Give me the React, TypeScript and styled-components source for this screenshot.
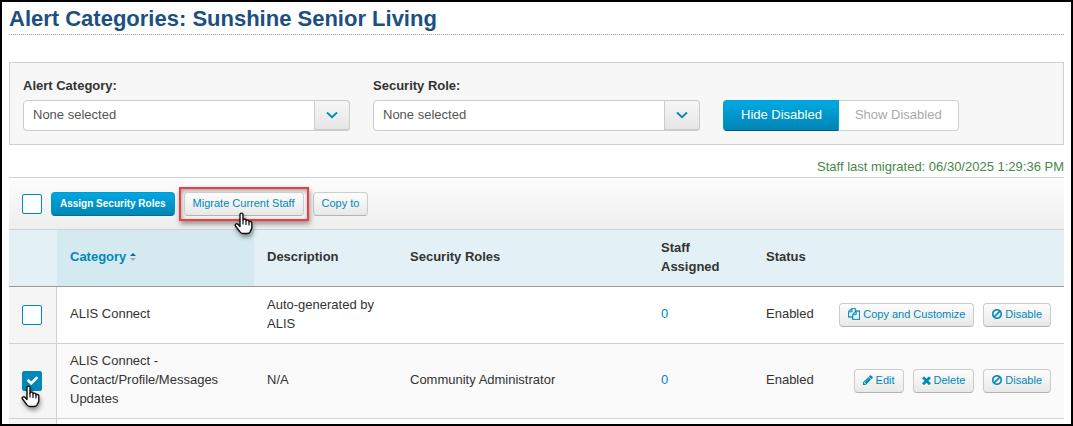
import React from "react";
import styled, { createGlobalStyle, css } from "styled-components";

const colors = {
  link: "#0088b9",
  text: "#333",
  line: "#d1d1d1",
  title: "#1b5080",
};

const GlobalStyle = createGlobalStyle`
  *, *::before, *::after { box-sizing: border-box; }
  body {
    margin: 0;
    background: #fff;
    color: ${colors.text};
    font: 13px/18px "Liberation Sans", Arial, sans-serif;
  }
  button, select, input { font-family: inherit; }
`;

const Frame = styled.main`
  height: 100vh;
  overflow: hidden;
  padding: 0 7px;
  border: 2px solid #000;
`;

const Title = styled.h1`
  margin: 0 0 27px;
  padding: 5px 0 3px;
  border-bottom: 1px dotted #999;
  color: ${colors.title};
  font-size: 22px;
  line-height: 24px;
`;

const FilterPanel = styled.section`
  display: flex;
  align-items: flex-end;
  gap: 23px;
  padding: 14px 13px 13px;
  border: 1px solid ${colors.line};
  background: #f7f7f7;
`;

const Field = styled.div`
  display: flex;
  flex-direction: column;
  flex: 0 1 327px;
  gap: 5px;
`;

const Label = styled.label`
  font-weight: bold;
`;

const SelectBox = styled.div`
  display: flex;
  position: relative;
  height: 31px;
`;

const Select = styled.select`
  appearance: none;
  width: 100%;
  padding: 0 44px 2px 9px;
  border: 1px solid #ccc;
  border-radius: 4px;
  background: #fff;
  color: #555;
  font-size: 13px;
`;

const SelectArrow = styled.span`
  position: absolute;
  top: 0;
  right: 0;
  bottom: 0;
  display: grid;
  place-items: center;
  width: 36px;
  border: 1px solid #ccc;
  border-bottom-width: 2px;
  border-radius: 0 4px 4px 0;
  background: linear-gradient(#f6f6f6, #e6e6e6);
  color: ${colors.link};
  pointer-events: none;
`;

const Segmented = styled.div`
  display: flex;
`;

const Segment = styled.button<{ $active?: boolean }>`
  height: 31px;
  padding: 0 16px 2px;
  font-size: 13px;
  white-space: nowrap;
  ${(p) =>
    p.$active
      ? css`
          padding-left: 17px;
          border: 1px solid #00a1da;
          border-bottom-color: #00587a;
          border-radius: 4px 0 0 4px;
          background: linear-gradient(#00a9e3, #0084b4);
          color: #fff;
        `
      : css`
          border: 1px solid ${colors.line};
          border-left: 0;
          border-radius: 0 4px 4px 0;
          background: #fff;
          color: #aaa;
        `}
`;

const Migrated = styled.p`
  margin: 0;
  padding: 13px 0 1px;
  color: #468847;
  text-align: right;
`;

const Toolbar = styled.div`
  display: flex;
  align-items: center;
  gap: 9px;
  height: 53px;
  padding: 0 13px;
  border-top: 1px solid ${colors.line};
  border-bottom: 1px solid ${colors.line};
  background: linear-gradient(#fdfdfd, #eee);
`;

const CheckWrap = styled.span`
  display: flex;
  position: relative;
  width: 20px;
  height: 20px;
`;

const Check = styled.input`
  appearance: none;
  width: 20px;
  height: 20px;
  margin: 0;
  border: 1px solid ${colors.link};
  border-radius: 2px;
  background: #fff;
  &:checked { background: ${colors.link}; }
`;

const Tick = styled.svg`
  position: absolute;
  top: 3px;
  left: 4px;
  pointer-events: none;
`;

const Button = styled.button<{ $primary?: boolean }>`
  display: inline-flex;
  align-items: center;
  gap: 3px;
  height: 24px;
  padding: 0 8px 1px;
  border: 1px solid #ccc;
  border-bottom-color: #b3b3b3;
  border-radius: 4px;
  background: linear-gradient(#fdfdfd, #e8e8e8);
  color: ${colors.link};
  font-size: 11px;
  white-space: nowrap;
  ${(p) =>
    p.$primary &&
    css`
      border-color: #009bd2 #009bd2 #006d95;
      background: linear-gradient(#00a7e1, #0084b4);
      color: #fff;
      font-size: 10px;
      font-weight: bold;
    `}
`;

const Highlight = styled.div`
  display: flex;
  position: relative;
  margin: 0 -5px;
  padding: 3px;
  border: 2px solid #f03e3e;
  box-shadow: 1px 3px 5px rgba(0, 0, 0, 0.4), inset 1px 2px 4px rgba(0, 0, 0, 0.35);
`;

const Pointer = styled.svg<{ $left: number; $top: number }>`
  position: absolute;
  z-index: 1;
  left: ${(p) => p.$left}px;
  top: ${(p) => p.$top}px;
  filter: drop-shadow(1px 3px 2px rgba(0, 0, 0, 0.4));
  pointer-events: none;
`;

const Table = styled.table`
  width: 100%;
  table-layout: fixed;
  border-collapse: separate;
  border-spacing: 0;
  line-height: 19px;
`;

const Col = styled.col<{ $w?: number }>`
  width: ${(p) => (p.$w ? `${p.$w}px` : "auto")};
`;

const HeadCell = styled.th<{ $sorted?: boolean }>`
  height: 57px;
  padding: 7px 13px 10px;
  border-bottom: 1px solid #999;
  background: ${(p) => (p.$sorted ? "#d4e9f0" : "#e3f1f6")};
  text-align: left;
`;

const SortLink = styled.a`
  display: inline-flex;
  align-items: center;
  gap: 4px;
  color: ${colors.link};
  text-decoration: none;
`;

const Row = styled.tr<{ $alt?: boolean }>`
  background: ${(p) => (p.$alt ? "#fafafa" : "#fff")};
`;

const Cell = styled.td`
  height: 57px;
  padding: 7px 13px 10px;
  border-bottom: 1px solid ${colors.line};
  vertical-align: middle;
`;

const CheckCell = styled(Cell)`
  padding: 10px 13px;
  border-right: 1px solid ${colors.line};
  background: #f5f5f5;
`;

const ActionCell = styled(Cell)`
  padding: 9px 13px 10px;
`;

const NextRowCell = styled.td`
  height: 20px;
  &:first-child {
    border-right: 1px solid ${colors.line};
    background: #f5f5f5;
  }
`;

const CountLink = styled.a`
  color: ${colors.link};
  text-decoration: none;
`;

const Actions = styled.div`
  display: flex;
  justify-content: flex-end;
  gap: 9px;
`;

const iconPaths = {
  copy: "M1696 384q40 0 68 28t28 68v1216q0 40-28 68t-68 28h-960q-40 0-68-28t-28-68v-288h-544q-40 0-68-28t-28-68v-672q0-40 20-88t48-76l408-408q28-28 76-48t88-20h416q40 0 68 28t28 68v328q68-40 128-40h416zm-544 213l-299 299h299v-299zm-640-384l-299 299h299v-299zm196 647l316-316v-416h-384v416q0 40-28 68t-68 28h-416v640h512v-256q0-40 20-88t48-76zm956 804v-1152h-384v416q0 40-28 68t-68 28h-416v640h896z",
  edit: "M491 1536l91-91-235-235-91 91v107h128v128h107zm523-928q0-22-22-22-10 0-17 7l-542 542q-7 7-7 17 0 22 22 22 10 0 17-7l542-542q7-7 7-17zm-54-192l416 416-832 832h-416v-416zm683 96q0 53-37 90l-166 166-416-416 166-165q36-38 90-38 53 0 91 38l235 234q37 39 37 91z",
  remove: "M1490 1322q0 40-28 68l-136 136q-28 28-68 28t-68-28l-294-294-294 294q-28 28-68 28t-68-28l-136-136q-28-28-28-68t28-68l294-294-294-294q-28-28-28-68t28-68l136-136q28-28 68-28t68 28l294 294 294-294q28-28 68-28t68 28l136 136q28 28 28 68t-28 68l-294 294 294 294q28 28 28 68z",
  ban: "M1440 893q0-161-87-295l-754 753q137 89 297 89 111 0 211.5-43.5t173.5-116.5 116-174.5 43-212.5zm-999 299l755-754q-135-91-300-91-148 0-273 73t-198 199-73 274q0 162 89 299zm1223-299q0 157-61 300t-163.5 246-245 164-298.5 61-298.5-61-245-164-163.5-246-61-300 61-299.5 163.5-245.5 245-164 298.5-61 298.5 61 245 164 163.5 245.5 61 299.5z",
  check: "M1671 566q0 40-28 68l-724 724-136 136q-28 28-68 28t-68-28l-136-136-362-362q-28-28-28-68t28-68l136-136q28-28 68-28t68 28l294 295 656-657q28-28 68-28t68 28l136 136q28 28 28 68z",
};

type IconName = "copy" | "edit" | "remove" | "ban";

const iconBoxes: Record<IconName, { box: string; size: number }> = {
  copy: { box: "0 0 1792 1792", size: 12 },
  edit: { box: "128 128 1536 1536", size: 10 },
  remove: { box: "256 288 1280 1280", size: 9 },
  ban: { box: "128 125 1536 1536", size: 10 },
};

const Icon = ({ name }: { name: IconName }) => {
  const { box, size } = iconBoxes[name];
  return (
    <svg
      width={size}
      height={size}
      viewBox={box}
      fill="currentColor"
      stroke="currentColor"
      strokeWidth={name === "copy" || name === "ban" ? 40 : 0}
      aria-hidden="true"
    >
      <path d={iconPaths[name]} />
    </svg>
  );
};

const HandPointer = ({ left, top }: { left: number; top: number }) => (
  <Pointer $left={left} $top={top} width="19" height="23" viewBox="0 0 19 23" aria-hidden="true">
    <path
      d="M6 2.5C6 .6 9 .6 9 2.5V8c.3-1.400 3-1.300 3 .3v.6c.5-1.200 3-1 3 .5v.6c.6-1 2.800-.8 2.800 1v4.500c0 2-1.300 3.200-1.800 4.500-.6 1-1.500 1.500-3 1.500H9c-1.700 0-2.500-.7-3.300-2L1.500 14c-1-1.700 1-3 2.300-1.700L6 14.500z"
      fill="#fff"
      stroke="#111"
      strokeWidth="1.4"
      strokeLinejoin="round"
    />
    <path d="M9 8v4.500M12 9v4M15 10v3.500" stroke="#111" strokeWidth="1.2" fill="none" />
  </Pointer>
);

const Checkbox = ({ label, checked = false, pointed = false }: { label: string; checked?: boolean; pointed?: boolean }) => (
  <CheckWrap>
    <Check type="checkbox" aria-label={label} defaultChecked={checked} />
    {checked && (
      <Tick width="13" height="13" viewBox="0 0 1792 1792" fill="#fff" aria-hidden="true">
        <path d={iconPaths.check} />
      </Tick>
    )}
    {pointed && <HandPointer left={-1} top={14} />}
  </CheckWrap>
);

const Filter = ({ id, label }: { id: string; label: string }) => (
  <Field>
    <Label htmlFor={id}>{label}</Label>
    <SelectBox>
      <Select id={id}>
        <option>None selected</option>
      </Select>
      <SelectArrow>
        <svg width="12" height="8" viewBox="0 0 12 8" fill="none" stroke="currentColor" strokeWidth="1.8" aria-hidden="true">
          <path d="M1 1.500L6 6.200L11 1.500" />
        </svg>
      </SelectArrow>
    </SelectBox>
  </Field>
);

type Category = {
  name: string;
  description: string;
  roles: string;
  staff: number;
  status: string;
  checked?: boolean;
  actions: { icon: IconName; label: string }[];
};

const categories: Category[] = [
  {
    name: "ALIS Connect",
    description: "Auto-generated by ALIS",
    roles: "",
    staff: 0,
    status: "Enabled",
    actions: [
      { icon: "copy", label: "Copy and Customize" },
      { icon: "ban", label: "Disable" },
    ],
  },
  {
    name: "ALIS Connect - Contact/Profile/Messages Updates",
    description: "N/A",
    roles: "Community Administrator",
    staff: 0,
    status: "Enabled",
    checked: true,
    actions: [
      { icon: "edit", label: "Edit" },
      { icon: "remove", label: "Delete" },
      { icon: "ban", label: "Disable" },
    ],
  },
];

export default function App() {
  return (
    <>
      <GlobalStyle />
      <Frame>
        <Title>Alert Categories: Sunshine Senior Living</Title>
        <FilterPanel>
          <Filter id="alert-category" label="Alert Category:" />
          <Filter id="security-role" label="Security Role:" />
          <Segmented>
            <Segment type="button" $active>Hide Disabled</Segment>
            <Segment type="button">Show Disabled</Segment>
          </Segmented>
        </FilterPanel>
        <Migrated>Staff last migrated: 06/30/2025 1:29:36 PM</Migrated>
        <Toolbar>
          <Checkbox label="Select all" />
          <Button type="button" $primary>Assign Security Roles</Button>
          <Highlight>
            <Button type="button">Migrate Current Staff</Button>
            <HandPointer left={53} top={23} />
          </Highlight>
          <Button type="button">Copy to</Button>
        </Toolbar>
        <Table>
          <colgroup>
            <Col $w={48} />
            <Col $w={197} />
            <Col $w={143} />
            <Col />
            <Col $w={105} />
            <Col $w={74} />
            <Col $w={237} />
          </colgroup>
          <thead>
            <tr>
              <HeadCell />
              <HeadCell $sorted>
                <SortLink href="#category">
                  Category
                  <svg width="6" height="8" viewBox="0 0 6 8" aria-hidden="true">
                    <path d="M0 3L3 0L6 3Z" fill="#0a6a9c" />
                    <path d="M0 5L3 8L6 5Z" fill="#aaa" />
                  </svg>
                </SortLink>
              </HeadCell>
              <HeadCell>Description</HeadCell>
              <HeadCell>Security Roles</HeadCell>
              <HeadCell>Staff Assigned</HeadCell>
              <HeadCell>Status</HeadCell>
              <HeadCell />
            </tr>
          </thead>
          <tbody>
            {categories.map((c, i) => (
              <Row key={c.name} $alt={i % 2 === 1}>
                <CheckCell>
                  <Checkbox label={c.name} checked={c.checked} pointed={c.checked} />
                </CheckCell>
                <Cell>{c.name}</Cell>
                <Cell>{c.description}</Cell>
                <Cell>{c.roles}</Cell>
                <Cell>
                  <CountLink href="#staff">{c.staff}</CountLink>
                </Cell>
                <Cell>{c.status}</Cell>
                <ActionCell>
                  <Actions>
                    {c.actions.map((a) => (
                      <Button type="button" key={a.label}>
                        <Icon name={a.icon} />
                        {a.label}
                      </Button>
                    ))}
                  </Actions>
                </ActionCell>
              </Row>
            ))}
            <Row>
              <NextRowCell />
              <NextRowCell colSpan={6} />
            </Row>
          </tbody>
        </Table>
      </Frame>
    </>
  );
}
